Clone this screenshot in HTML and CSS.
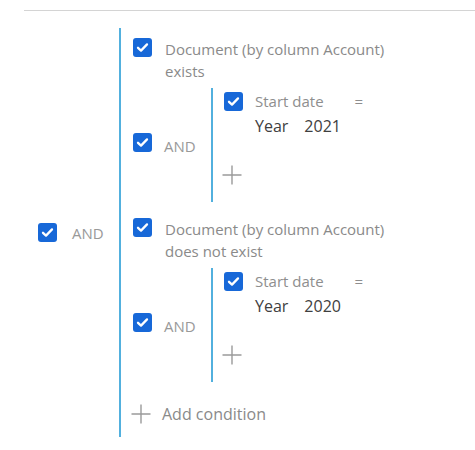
FILE: index.html
```html
<!DOCTYPE html>
<html>
<head>
<meta charset="utf-8">
<link rel="stylesheet" href="styles.css">
</head>
<body>
<div class="topbar"></div>
<div class="group outer">
  <div class="op">
    <svg class="cb" width="19" height="19" viewBox="0 0 19 19"><rect width="19" height="19" rx="3" fill="#1768d8"/><path d="M5 9.8 L8 12.6 L14 6.4" fill="none" stroke="#fff" stroke-width="2.3" stroke-linecap="round" stroke-linejoin="round"/></svg>
    <span class="op-label">AND</span>
  </div>
  <div class="bracket">
    <div class="cond">
      <svg class="cb" width="19" height="19" viewBox="0 0 19 19"><rect width="19" height="19" rx="3" fill="#1768d8"/><path d="M5 9.8 L8 12.6 L14 6.4" fill="none" stroke="#fff" stroke-width="2.3" stroke-linecap="round" stroke-linejoin="round"/></svg>
      <div class="cond-text">Document (by column Account)<br>exists</div>
    </div>
    <div class="group inner">
      <div class="op">
        <svg class="cb" width="19" height="19" viewBox="0 0 19 19"><rect width="19" height="19" rx="3" fill="#1768d8"/><path d="M5 9.8 L8 12.6 L14 6.4" fill="none" stroke="#fff" stroke-width="2.3" stroke-linecap="round" stroke-linejoin="round"/></svg>
        <span class="op-label">AND</span>
      </div>
      <div class="bracket">
        <div class="cond sub">
          <svg class="cb" width="19" height="19" viewBox="0 0 19 19"><rect width="19" height="19" rx="3" fill="#1768d8"/><path d="M5 9.8 L8 12.6 L14 6.4" fill="none" stroke="#fff" stroke-width="2.3" stroke-linecap="round" stroke-linejoin="round"/></svg>
          <div class="cond-body">
            <div class="field-line"><span class="field">Start date</span><span class="eq">=</span></div>
            <div class="value-line"><span>Year</span><span>2021</span></div>
          </div>
        </div>
        <div class="add">
          <svg class="plus" width="20" height="20" viewBox="0 0 20 20"><path d="M10 0.5 V19.5 M0.5 10 H19.5" stroke="#9a9a9a" stroke-width="1.4" fill="none"/></svg>
        </div>
      </div>
    </div>
    <div class="cond cond2">
      <svg class="cb" width="19" height="19" viewBox="0 0 19 19"><rect width="19" height="19" rx="3" fill="#1768d8"/><path d="M5 9.8 L8 12.6 L14 6.4" fill="none" stroke="#fff" stroke-width="2.3" stroke-linecap="round" stroke-linejoin="round"/></svg>
      <div class="cond-text">Document (by column Account)<br>does not exist</div>
    </div>
    <div class="group inner">
      <div class="op">
        <svg class="cb" width="19" height="19" viewBox="0 0 19 19"><rect width="19" height="19" rx="3" fill="#1768d8"/><path d="M5 9.8 L8 12.6 L14 6.4" fill="none" stroke="#fff" stroke-width="2.3" stroke-linecap="round" stroke-linejoin="round"/></svg>
        <span class="op-label">AND</span>
      </div>
      <div class="bracket">
        <div class="cond sub">
          <svg class="cb" width="19" height="19" viewBox="0 0 19 19"><rect width="19" height="19" rx="3" fill="#1768d8"/><path d="M5 9.8 L8 12.6 L14 6.4" fill="none" stroke="#fff" stroke-width="2.3" stroke-linecap="round" stroke-linejoin="round"/></svg>
          <div class="cond-body">
            <div class="field-line"><span class="field">Start date</span><span class="eq">=</span></div>
            <div class="value-line"><span>Year</span><span>2020</span></div>
          </div>
        </div>
        <div class="add">
          <svg class="plus" width="20" height="20" viewBox="0 0 20 20"><path d="M10 0.5 V19.5 M0.5 10 H19.5" stroke="#9a9a9a" stroke-width="1.4" fill="none"/></svg>
        </div>
      </div>
    </div>
    <div class="add-cond">
      <svg class="plus" width="20" height="20" viewBox="0 0 20 20"><path d="M10 0.5 V19.5 M0.5 10 H19.5" stroke="#9a9a9a" stroke-width="1.4" fill="none"/></svg>
      <span>Add condition</span>
    </div>
  </div>
</div>
</body>
</html>
```
FILE: styles.css
```css
body {
  margin: 0;
  background: #fff;
  font-family: "Open Sans", "Liberation Sans", sans-serif;
  color: #8a8a8a;
}
.topbar {
  height: 10px;
  margin-left: 24px;
  border-bottom: 1px solid #d4d4d4;
}
.group {
  display: flex;
  align-items: center;
}
.outer {
  margin-top: 17px;
}
.op {
  display: flex;
  align-items: center;
  box-sizing: border-box;
  flex: 0 0 auto;
}
.outer > .op {
  width: 119px;
  padding-left: 38px;
  gap: 15px;
}
.inner > .op {
  width: 78px;
  gap: 12px;
}
.op-label {
  font-size: 15px;
  line-height: 22px;
  color: #999;
}
.inner > .op .cb {
  margin-bottom: 6px;
}
.inner > .op .op-label {
  padding-top: 2px;
}
.cb {
  display: block;
  flex: 0 0 auto;
}
.bracket {
  border-left: 2px solid #52b0de;
}
.outer > .bracket {
  padding: 10px 0 12px 12px;
}
.inner > .bracket {
  padding: 2px 0 17px 11px;
}
.inner {
  margin-top: 6px;
}
.cond {
  display: flex;
  align-items: flex-start;
  gap: 13px;
}
.cond2 {
  margin-top: 16px;
}
.cond-text {
  font-size: 15px;
  line-height: 22px;
  color: #8a8a8a;
}
.cond.sub {
  gap: 12px;
}
.cond.sub .cb {
  margin-top: 2px;
}
.field-line {
  display: flex;
  font-size: 15px;
  line-height: 22px;
  color: #8e8e8e;
}
.eq {
  margin-left: 31px;
}
.value-line {
  display: flex;
  gap: 16px;
  margin-top: 2px;
  font-size: 16px;
  line-height: 24px;
  color: #404040;
}
.add {
  margin-top: 27px;
  height: 20px;
}
.plus {
  display: block;
  margin-left: -2px;
}
.add-cond {
  display: flex;
  align-items: center;
  gap: 11px;
  margin-top: 21px;
  font-size: 16px;
  line-height: 22px;
  color: #8a8a8a;
}
```
